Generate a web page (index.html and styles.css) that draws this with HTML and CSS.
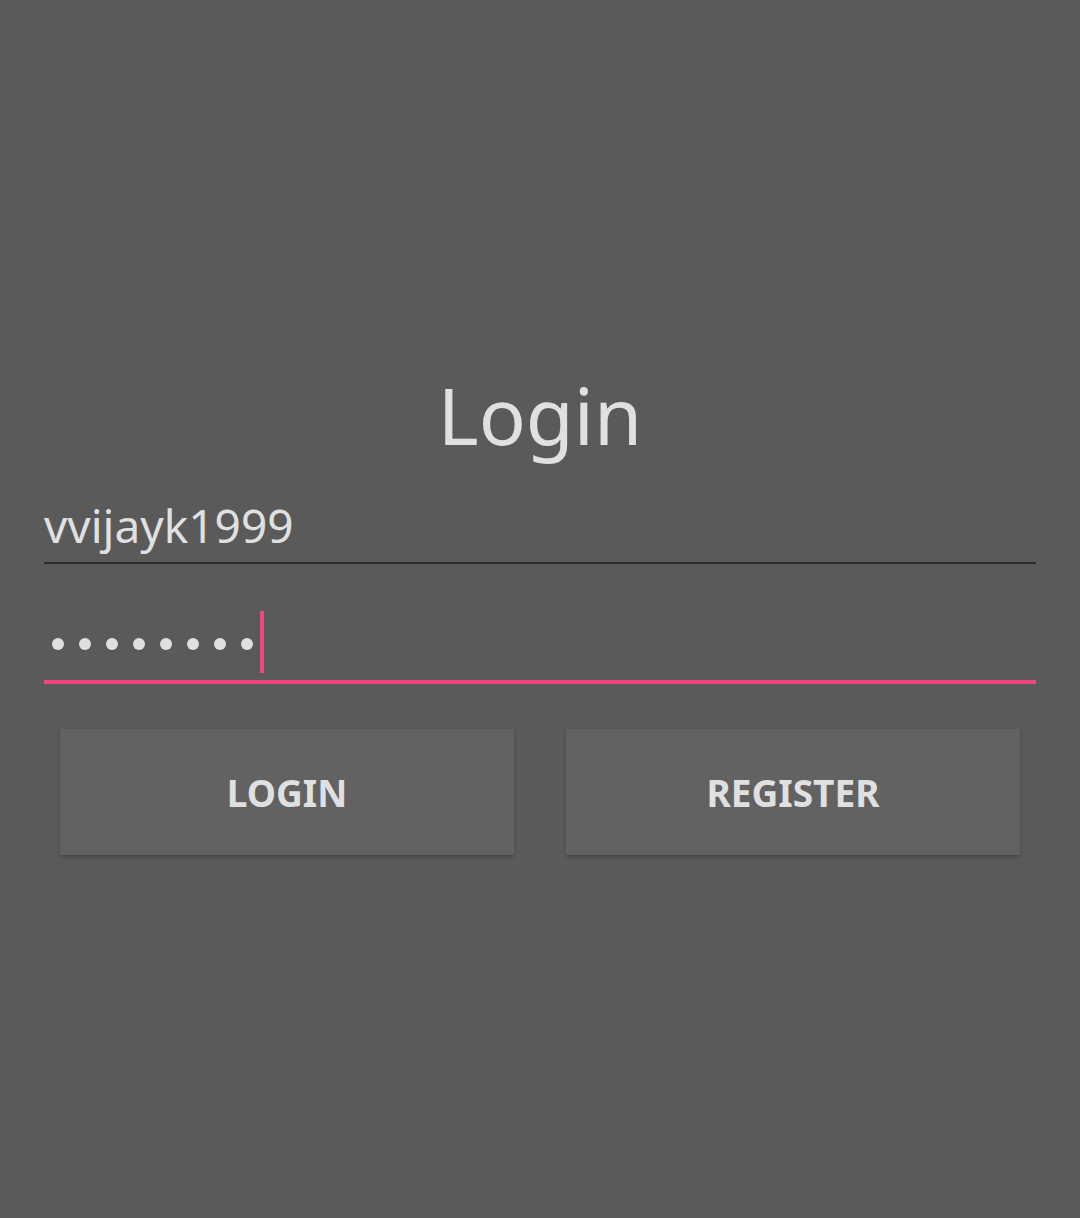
FILE: index.html
```html
<!DOCTYPE html>
<html>
<head>
<meta charset="utf-8">
<link rel="stylesheet" href="styles.css">
</head>
<body>
<main class="screen">
  <h1 class="title">Login</h1>
  <div class="field field-user"><span class="value">vvijayk1999</span></div>
  <div class="field field-pass">
    <span class="dots">
      <span class="dot"></span><span class="dot"></span><span class="dot"></span><span class="dot"></span>
      <span class="dot"></span><span class="dot"></span><span class="dot"></span><span class="dot"></span>
    </span>
    <span class="cursor"></span>
  </div>
  <div class="actions">
    <button class="btn">LOGIN</button>
    <button class="btn">REGISTER</button>
  </div>
</main>
</body>
</html>
```
FILE: styles.css
```css
html, body {
  margin: 0;
  padding: 0;
  background: #5a5a5a;
}
body {
  width: 1080px;
  height: 1218px;
  font-family: "Noto Sans", "Open Sans", sans-serif;
  color: #e0e0e0;
}
.screen {
  padding: 376px 44px 0 44px;
}
.title {
  margin: 0;
  font-size: 78px;
  line-height: 79px;
  font-weight: 400;
  text-align: center;
  color: #e0e0e0;
}
.field-user {
  margin-top: 47px;
  height: 60px;
  border-bottom: 2px solid #2e2e2e;
  font-size: 46px;
  line-height: 46px;
}
.field-pass {
  display: flex;
  align-items: center;
  padding-top: 47px;
  padding-bottom: 7px;
  border-bottom: 4px solid #ef4780;
}
.dots {
  display: flex;
  gap: 15px;
  margin-left: 8px;
  margin-top: 4px;
}
.dot {
  width: 12px;
  height: 12px;
  border-radius: 50%;
  background: #e0e0e0;
}
.cursor {
  width: 4px;
  height: 62px;
  margin-left: 7px;
  background: #ef4780;
}
.actions {
  display: grid;
  grid-template-columns: 1fr 1fr;
  gap: 52px;
  padding: 0 16px;
  margin-top: 45px;
}
.btn {
  height: 126px;
  border: none;
  background: #626262;
  color: #e0e0e0;
  font-family: "Noto Sans", "Open Sans", sans-serif;
  font-size: 37px;
  font-weight: 700;
  box-shadow: 0 2px 3px rgba(0, 0, 0, 0.22);
  padding: 0;
}
```
